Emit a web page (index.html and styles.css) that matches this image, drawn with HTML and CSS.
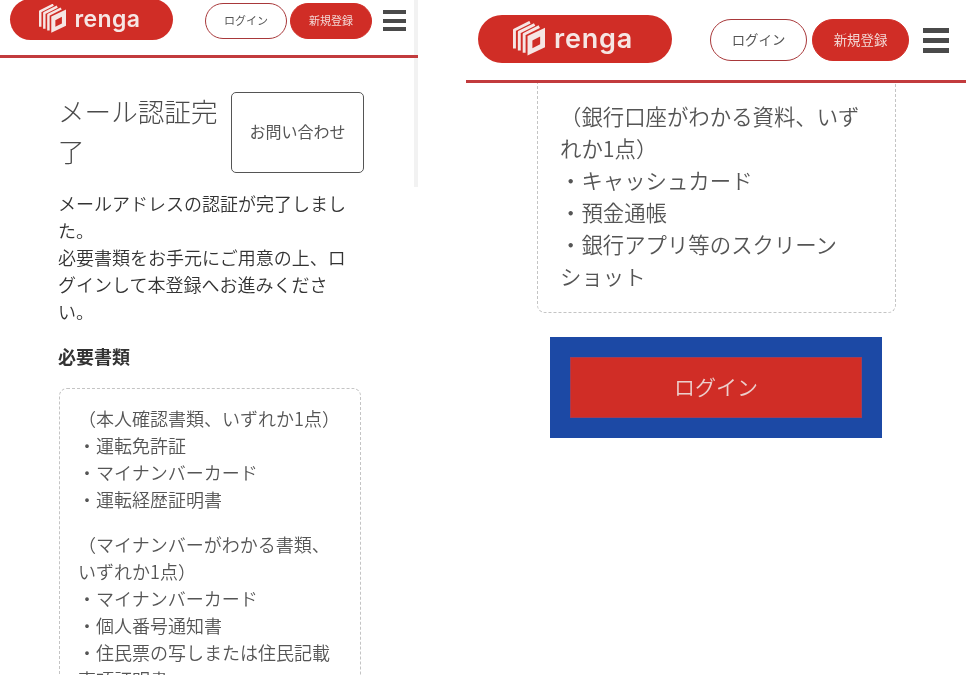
FILE: index.html
```html
<!DOCTYPE html>
<html lang="ja">
<head>
<meta charset="utf-8">
<title>メール認証完了</title>
<link rel="stylesheet" href="styles.css">
</head>
<body>
<div class="page">
  <section class="panel panel-small">
    <header class="header">
      <a class="logo"><svg class="logo-icon" viewBox="0 0 33 35" aria-hidden="true"><path d="M1.5 27.7V8.7L17.5 .7M6.5 29.9V10.9L22.3 3M11.5 32.1V13.1L27.1 5.3"/><path class="box" fill-rule="evenodd" d="M15 15L33 6.5V26.5L15 35ZM20 19.5V27.5L28 23.5V15.5Z"/></svg><span>renga</span></a>
      <a class="pill pill-outline">ログイン</a>
      <a class="pill pill-solid">新規登録</a>
      <div class="burger"><i></i><i></i><i></i></div>
    </header>
    <main class="content">
      <div class="title-row">
        <h1>メール認証完了</h1>
        <a class="contact">お問い合わせ</a>
      </div>
      <p class="lead">メールアドレスの認証が完了しました。<br>必要書類をお手元にご用意の上、ログインして本登録へお進みください。</p>
      <h2>必要書類</h2>
      <div class="docs">
        <p>（本人確認書類、いずれか1点）<br>・運転免許証<br>・マイナンバーカード<br>・運転経歴証明書</p>
        <p>（マイナンバーがわかる書類、いずれか1点）<br>・マイナンバーカード<br>・個人番号通知書<br>・住民票の写しまたは住民記載事項証明書</p>
      </div>
    </main>
    <div class="scrollbar"></div>
  </section>
  <section class="panel panel-large">
    <header class="header">
      <a class="logo"><svg class="logo-icon" viewBox="0 0 33 35" aria-hidden="true"><path d="M1.5 27.7V8.7L17.5 .7M6.5 29.9V10.9L22.3 3M11.5 32.1V13.1L27.1 5.3"/><path class="box" fill-rule="evenodd" d="M15 15L33 6.5V26.5L15 35ZM20 19.5V27.5L28 23.5V15.5Z"/></svg><span>renga</span></a>
      <a class="pill pill-outline">ログイン</a>
      <a class="pill pill-solid">新規登録</a>
      <div class="burger"><i></i><i></i><i></i></div>
    </header>
    <main class="content">
      <div class="docs docs-open">
        <p>（銀行口座がわかる資料、いずれか1点）<br>・キャッシュカード<br>・預金通帳<br>・銀行アプリ等のスクリーンショット</p>
      </div>
      <div class="login-frame"><a class="login-btn">ログイン</a></div>
    </main>
  </section>
</div>
</body>
</html>
```

FILE: styles.css
```css
* { box-sizing: border-box; }
html, body { margin: 0; background: #fff; }
body {
  width: 966px;
  height: 675px;
  overflow: hidden;
  font-family: "Noto Sans CJK JP", "Noto Sans", sans-serif;
  color: #444;
  line-break: strict;
}
.page { display: flex; gap: 48px; height: 675px; }
.panel { position: relative; height: 675px; overflow: hidden; filter: blur(.45px); }
.panel-small { width: 418px; }
.panel-large { width: 500px; }

/* Header */
.header { position: relative; z-index: 1; display: flex; align-items: flex-start; border-bottom: 3px solid #c23b3d; }
.panel-small .header { height: 57.5px; }
.panel-large .header { height: 83px; }

.logo {
  display: flex;
  align-items: center;
  justify-content: center;
  background: #d02d26;
  color: #f6e6e4;
  border-radius: 999px;
  font-family: "Inter", sans-serif;
  font-weight: 600;
}
.logo-icon { flex: none; fill: none; stroke: #f6e6e4; stroke-width: 3; stroke-linejoin: round; }
.logo-icon .box { fill: #f6e6e4; stroke: none; }
.panel-small .logo { width: 163px; height: 41px; margin: -1px 32px 0 10px; gap: 9px; font-size: 23px; letter-spacing: .4px; padding: 0 4px 2px 0; }
.panel-small .logo-icon { width: 27px; height: 29px; }
.panel-large .logo { width: 194px; height: 48px; margin: 15px 38px 0 12px; gap: 9px; font-size: 27px; letter-spacing: .8px; padding: 0 4px 2px 0; }
.panel-large .logo-icon { width: 32px; height: 35px; }

.pill {
  display: flex;
  align-items: center;
  justify-content: center;
  border-radius: 999px;
  border: 1px solid #a8383a;
  padding-bottom: 2px;
}
.pill-outline { background: #fff; color: #555; }
.pill-solid { background: #d02d26; color: #f3d8d5; border-color: #d02d26; }
.panel-small .pill { width: 82px; height: 36px; margin-top: 3px; font-size: 11px; }
.panel-small .pill-solid { margin-left: 3px; }
.panel-large .pill { width: 97px; height: 42px; margin-top: 19px; font-size: 13.4px; }
.panel-large .pill-solid { margin-left: 5px; }

.burger { display: flex; flex-direction: column; justify-content: space-between; }
.burger i { display: block; background: #4a4a4a; }
.panel-small .burger { width: 23px; height: 21px; margin: 10px 0 0 11px; }
.panel-small .burger i { height: 4px; }
.panel-large .burger { width: 26px; height: 25px; margin: 28px 0 0 14px; }
.panel-large .burger i { height: 5px; }

/* Left panel content */
.panel-small .content { padding: 33.5px 54px 0 58px; font-size: 18px; line-height: 27px; }
.title-row { display: flex; }
h1 {
  width: 173px;
  margin: 0;
  font-size: 26.6px;
  font-weight: 300;
  line-height: 40px;
  color: #4a4a4a;
}
.contact {
  display: flex;
  align-items: center;
  justify-content: center;
  flex: none;
  width: 133px;
  height: 81px;
  margin-top: 1px;
  padding-bottom: 2px;
  border: 1px solid #555;
  border-radius: 5px;
  font-size: 16px;
  color: #555;
}
.lead { width: 292px; margin: 17px 0 0; color: #333; font-weight: 350; }
h2 { margin: 18px 0 0; font-size: 18px; line-height: 27px; font-weight: 700; color: #333; }
.docs { border: 1px dashed #c4c4c4; border-radius: 8px; color: #555; font-weight: 350; }
.docs p { margin: 0; }
.panel-small .docs { width: 302px; margin: 18px 0 0 1px; padding: 16px 18px 16px 18px; }
.panel-small .docs p + p { margin-top: 18px; }

/* Right panel content */
.panel-large .content { padding: 0 0 0 71px; font-size: 21.4px; line-height: 32px; }
.docs-open {
  width: 359px;
  padding: 17px 26px 20px 22px;
  border-top: 0;
  border-radius: 0 0 8px 8px;
}
.login-frame {
  width: 332px;
  margin: 24px 0 0 13px;
  padding: 20px;
  background: #1c49a5;
}
.login-btn {
  display: flex;
  align-items: center;
  justify-content: center;
  height: 61px;
  padding-bottom: 4px;
  background: #d02d26;
  border: 1px solid #a33c55;
  color: #eccfcc;
  font-size: 21px;
  font-weight: 350;
}

.scrollbar {
  position: absolute;
  top: 0;
  right: 0;
  width: 4px;
  height: 187px;
  background: #f2f2f2;
}
```
